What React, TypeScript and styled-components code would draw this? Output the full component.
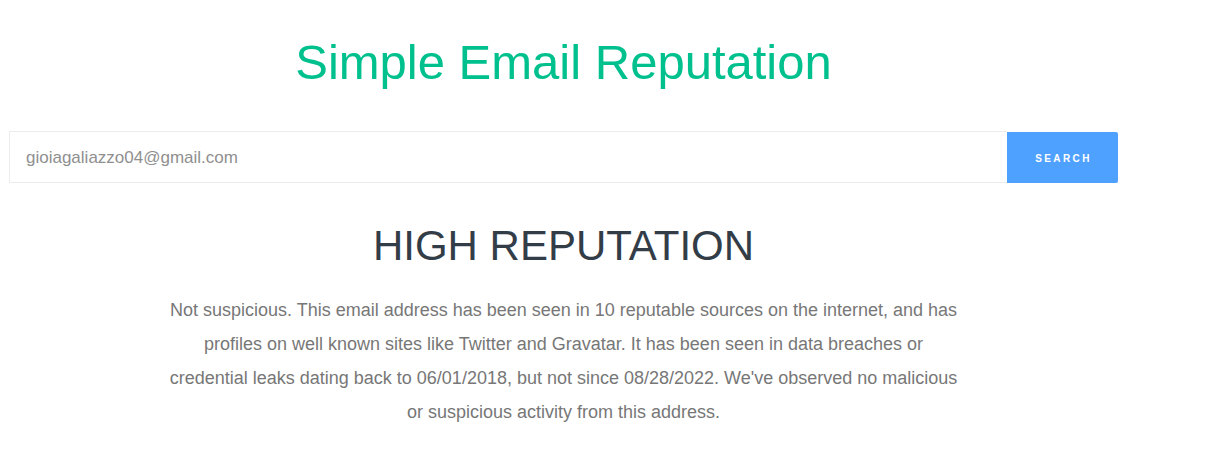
import styled, { createGlobalStyle } from "styled-components";

const GlobalStyle = createGlobalStyle`
  html, body {
    margin: 0;
    padding: 0;
    background: #ffffff;
    font-family: "Liberation Sans", Arial, sans-serif;
  }
`;

export default function App() {
  return (
    <>
      <GlobalStyle />
      <Page>
        <Title>Simple Email Reputation</Title>
        <SearchForm onSubmit={(e) => e.preventDefault()}>
          <EmailInput type="text" placeholder="gioiagaliazzo04@gmail.com" />
          <SearchButton type="submit">Search</SearchButton>
        </SearchForm>
        <Result>
          <Verdict>HIGH REPUTATION</Verdict>
          <Summary>
            Not suspicious. This email address has been seen in 10 reputable sources on the
            internet, and has profiles on well known sites like Twitter and Gravatar. It has
            been seen in data breaches or credential leaks dating back to 06/01/2018, but not
            since 08/28/2022. We've observed no malicious or suspicious activity from this
            address.
          </Summary>
        </Result>
      </Page>
    </>
  );
}

const Page = styled.main`
  width: 1109px;
  margin-left: 9px;
  padding-top: 34px;
`;

const Title = styled.h1`
  margin: 0;
  text-align: center;
  font-size: 49px;
  font-weight: 400;
  line-height: 56px;
  color: #00c18e;
`;

const SearchForm = styled.form`
  display: flex;
  margin-top: 41px;
  height: 52px;
`;

const EmailInput = styled.input`
  flex: 1;
  box-sizing: border-box;
  height: 52px;
  border: 1px solid #ececec;
  border-right: none;
  padding: 2px 16px 0;
  font-family: "Liberation Sans", Arial, sans-serif;
  font-size: 17px;
  outline: none;

  &::placeholder {
    color: #8f8f8f;
  }
`;

const SearchButton = styled.button`
  width: 111px;
  height: 51px;
  margin-top: 1px;
  padding: 2px 0 0 2px;
  border: none;
  border-radius: 0 2px 2px 0;
  background: #4fa1ff;
  color: #ffffff;
  font-family: "Liberation Sans", Arial, sans-serif;
  font-size: 10px;
  font-weight: 700;
  letter-spacing: 2.4px;
  text-transform: uppercase;
  cursor: pointer;
`;

const Result = styled.section`
  display: flex;
  flex-direction: column;
  align-items: center;
  margin-top: 38px;
`;

const Verdict = styled.h2`
  margin: 0;
  font-size: 42px;
  font-weight: 400;
  line-height: 50px;
  color: #333d48;
`;

const Summary = styled.p`
  margin: 22px 0 0;
  max-width: 800px;
  text-align: center;
  font-size: 18px;
  line-height: 34px;
  color: #777777;
`;
